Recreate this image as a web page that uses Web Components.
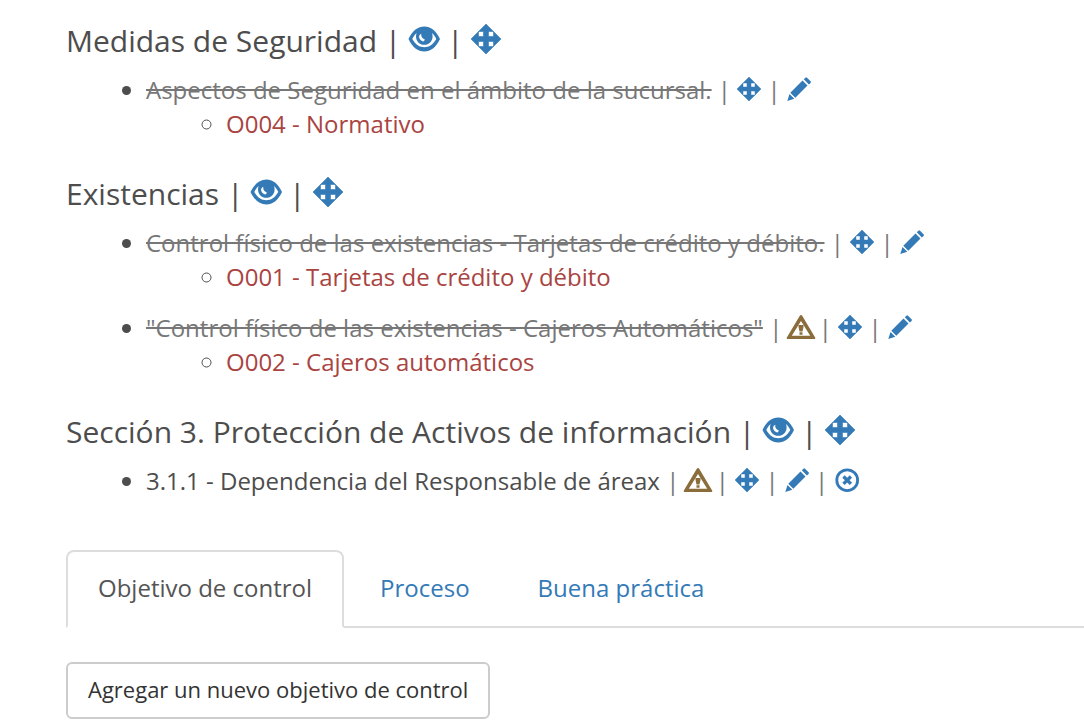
<!DOCTYPE html>
<html lang="es">
<head>
<meta charset="utf-8">
<title>Objetivos de control</title>
<style>
  body { margin: 0; background: #fff; color: #4d4d4d; font: 24px/34px "Open Sans", sans-serif; }
</style>
</head>
<body>
<review-page>
  <control-section heading="Medidas de Seguridad">
    <control-item label="Aspectos de Seguridad en el ámbito de la sucursal." actions="move edit" struck>
      <objective-item>O004 - Normativo</objective-item>
    </control-item>
  </control-section>
  <control-section heading="Existencias">
    <control-item label="Control físico de las existencias - Tarjetas de crédito y débito." actions="move edit" struck>
      <objective-item>O001 - Tarjetas de crédito y débito</objective-item>
    </control-item>
    <control-item label='"Control físico de las existencias - Cajeros Automáticos"' actions="warn move edit" struck>
      <objective-item>O002 - Cajeros automáticos</objective-item>
    </control-item>
  </control-section>
  <control-section heading="Sección 3. Protección de Activos de información">
    <control-item label="3.1.1 - Dependencia del Responsable de áreax" actions="warn move edit remove"></control-item>
  </control-section>
  <tab-bar slot="tabs">
    <tab-link active>Objetivo de control</tab-link>
    <tab-link>Proceso</tab-link>
    <tab-link>Buena práctica</tab-link>
  </tab-bar>
  <add-button slot="panel">Agregar un nuevo objetivo de control</add-button>
</review-page>

<script>
const ICONS = {
  eye: ['0 0 30 30', `<path fill-rule="evenodd" d="M-.5 15C3.500 6.500 9 2.500 15.300 2.500S27 6.500 31 15C27 23.500 21.600 27.500 15.300 27.500S3.500 23.500-.5 15ZM3.300 15C6.800 20.800 10.500 23.200 15.300 23.200S23.800 20.800 27.300 15C26.200 12.700 24.800 10.600 23 9c.4 1.100.6 2.300.6 3.500 0 4.700-3.600 8.300-8.300 8.300S7 17.200 7 12.500C7 11.300 7.200 10.100 7.600 9 5.800 10.600 4.400 12.700 3.300 15Z"/><path fill="#fff" d="M12.300 9.800c-1.900.8-2.600 2.400-2 4.200.6 1.800 2.200 3.300 4 3.500 1.100-.4 1.500-1.300 1.300-2.200l-1.600-.9c-1.400-.9-2-2.600-1.700-4.600Z"/>`],
  move: ['0 0 1200 1200', '<path fill-rule="evenodd" d="M600 0 1200 600 600 1200 0 600ZM300 300V500H500V300ZM700 300V500H900V300ZM300 700V900H500V700ZM700 700V900H900V700Z" stroke="currentColor" stroke-width="24"/>'],
  edit: ['0 0 24 24', '<path d="M.3 24 2.500 16.900 7.300 21.700ZM3.300 15.700 15.500 3.500 20.500 8.500 8.300 20.700ZM16.800 2.300 18.400.7Q19.200 0 20 .7L23.600 4.300Q24.300 5.100 23.600 5.900L21.900 7.400Z"/>'],
  warn: ['0 0 24 24', '<path fill-rule="evenodd" d="M12 0Q12.700 0 13.200.7L26.300 22.800Q26.500 24 25.500 24H-1.500Q-2.500 24-2.300 22.800L10.800.7Q11.300 0 12 0ZM12 6 2.800 20.700H21.200Z"/><path d="M9.500 10H14.500V12L13.500 16.500H10.500L9.500 12ZM10.500 17.300H13.500V19.700H10.500Z"/>'],
  remove: ['0 0 24 24', '<circle cx="12.200" cy="12.200" r="10.400" fill="none" stroke="currentColor" stroke-width="2.800"/><path d="m8.500 8.500 7.400 7.400m0-7.400-7.400 7.400" fill="none" stroke="currentColor" stroke-width="3.300"/>']
};
const NAMES = { eye: 'Ver', move: 'Mover', edit: 'Editar', warn: 'Aviso', remove: 'Eliminar' };

function define(tag, render) {
  customElements.define(tag, class extends HTMLElement {
    constructor() { super(); this.attachShadow({ mode: 'open' }); }
    connectedCallback() { this.shadowRoot.innerHTML = render(this); }
  });
}
const iconLinks = names => names.map(n => ` | <icon-link name="${n}"></icon-link>`).join('');

define('icon-link', el => {
  const name = el.getAttribute('name');
  const [box, shape] = ICONS[name];
  return `<style>
    :host { display: inline; }
    a { color: ${name === 'warn' ? '#8a6d3b' : '#337ab7'}; text-decoration: none; }
    svg { width: 1em; height: 1em; vertical-align: -2px; overflow: visible; fill: currentColor; }
  </style><a href="#" aria-label="${NAMES[name]}"><svg viewBox="${box}" aria-hidden="true">${shape}</svg></a>`;
});

define('control-section', el => `<style>
    :host { display: block; margin-bottom: 36px; }
    h3 { margin: 0 0 16px; font-size: 30px; line-height: 33px; font-weight: 400; }
    ul { margin: 0; padding: 0 0 0 80px; list-style: disc; display: grid; row-gap: 17px; }
  </style><h3>${el.getAttribute('heading')}${iconLinks(['eye', 'move'])}</h3>
  <ul><slot></slot></ul>`);

define('control-item', el => {
  const label = el.getAttribute('label');
  return `<style>
    :host { display: list-item; }
    s { color: #777; text-decoration-thickness: 2px; }
    .actions { color: #777; }
    ul { margin: 0; padding: 0 0 0 80px; list-style: circle; }
  </style>${el.hasAttribute('struck') ? `<s>${label}</s>` : `<span>${label}</span>`}<span class="actions">${iconLinks(el.getAttribute('actions').split(' '))}</span>
  ${el.children.length ? '<ul><slot></slot></ul>' : ''}`;
});

define('objective-item', () => `<style>
    :host { display: list-item; }
    span { color: #a94442; }
  </style><span><slot></slot></span>`);

define('tab-link', el => `<style>
    :host { display: block; margin: 0 4px -2px 0; }
    a { display: block; padding: 19px 30px 21px; border: 2px solid transparent; border-radius: 8px 8px 0 0; color: #337ab7; text-decoration: none; }
    a.active { color: #555; background: #fff; border-color: #ddd; border-bottom-color: #fff; }
  </style><a href="#" class="${el.hasAttribute('active') ? 'active' : ''}"><slot></slot></a>`);

define('tab-bar', () => `<style>
    nav { display: flex; border-bottom: 2px solid #ddd; }
    :host { display: block; }
  </style><nav><slot></slot></nav>`);

define('add-button', () => `<style>
    :host { display: block; }
    button { margin: 0; padding: 10px 20px 12px; border: 2px solid #ccc; border-radius: 6px; background: #fff; color: #333; font: inherit; font-size: 22px; line-height: 31px; display: block; }
  </style><button type="button"><slot></slot></button>`);

define('review-page', () => `<style>
    :host { display: block; padding: 24px 0 0 66px; }
    .tabs { margin-top: 52px; }
    .panel { margin-top: 34px; }
    main ::slotted(control-section:last-of-type) { margin-bottom: 0; }
  </style><main><slot></slot></main>
  <div class="tabs"><slot name="tabs"></slot></div>
  <div class="panel"><slot name="panel"></slot></div>`);
</script>
</body>
</html>
